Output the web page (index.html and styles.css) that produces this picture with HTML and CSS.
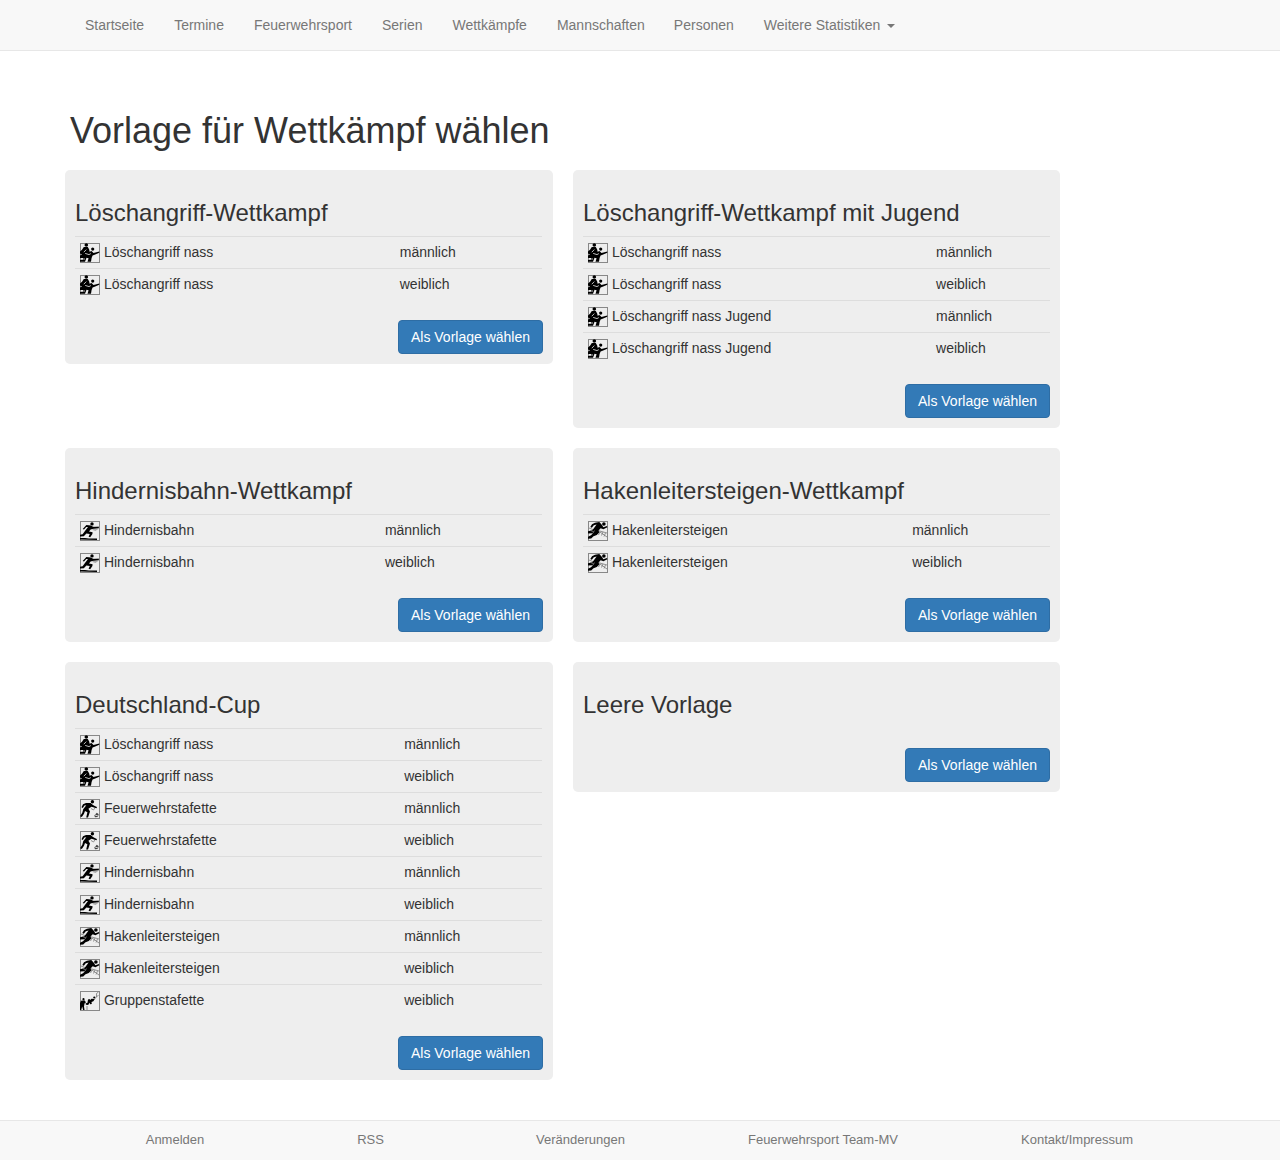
FILE: index.html
```html
<!DOCTYPE html>
<html lang="de">
<head>
<meta charset="utf-8">
<title>Vorlage für Wettkämpf wählen</title>
<link rel="stylesheet" href="styles.css">
</head>
<body>
<svg class="symbols" aria-hidden="true">
  <symbol id="la" viewBox="0 0 20 20">
    <rect class="frame" x=".5" y=".5" width="19" height="19"/>
    <circle cx="6.3" cy="2" r="1.8"/><circle cx="12.7" cy="6.1" r="1.6"/>
    <path d="M3.8 4 7.8 4 9.2 6.5 9.6 8.8 11.5 8 13.5 10 19.3 8.6V9.7L14.6 11.7 12.6 12.6 11.6 15 11 18.7H7.5L8.6 15.2 6.5 14.8 5 18.7H0V17L3 16.4 3 15H0V12.6L2 11.6 0 10.4V8.4L2 6.8Z"/>
    <path class="cut" d="M3.8 9.2 6.3 6.6M5.2 10.4 9 11.6 10.8 10.6M1.5 16H5"/>
  </symbol>
  <symbol id="hb" viewBox="0 0 20 20">
    <rect class="frame" x=".5" y=".5" width="19" height="19"/>
    <path class="mid" d="M13 5.5H19V7.5L15.5 10 12.5 9Z"/>
    <circle cx="12" cy="2.9" r="1.7"/>
    <path d="M6.4 4 10.8 4.4 13.5 6 18.8 5.8V6.9L13.4 7.8 10.6 8.4 9 10.6 12.6 11.2 12.4 13 10.2 16.2 8.6 15.8 9.8 13 6.4 12.6 3.8 15.2 0 15.4V13.8L2.6 13.2 4.6 10.4 8 6 6.2 5.9 4 8.6 2.7 7.9Z"/>
    <path d="M0 17 5 17 9 17.6H17V19L0 18.6Z"/>
  </symbol>
  <symbol id="hl" viewBox="0 0 20 20">
    <rect class="frame" x=".5" y=".5" width="19" height="19"/>
    <path class="thin" d="M1 7 6 9 12 11 19 16M10 9.5 19 12M12 11 10.5 14M15 11 13.5 14.5M17.5 12 16 15.5"/>
    <circle cx="15.9" cy="3" r="1.8"/>
    <path d="M7 1.7 11.3 1 14 4 15.3 6.2 19 5 19.4 6.3 15.4 8.3 12.7 7.2 10.5 9.6 11.2 11.5 8.8 14 5.5 15.2 3.2 17.6 0 17.8V15.8L3 14.2 5 12.3 0 12.4V10.2L4.4 9.2 8.6 3.4 5.8 4.3 3.8 6.8 2.3 6 4 3.3Z"/>
    <path class="thin" d="M2.5 9.5 6 11M6.5 9.5 5 12"/>
  </symbol>
  <symbol id="fs" viewBox="0 0 20 20">
    <rect class="frame" x=".5" y=".5" width="19" height="19"/>
    <path class="thin" d="M11 9.5 13.5 11 16 7.5"/>
    <circle cx="12.4" cy="2.8" r="1.7"/>
    <path d="M6 4 10.6 3.9 13 6 17 8.3 16.5 9.3 11.5 7.8 8.4 9.8 10 12.5 8 18.6H6.2L7.4 13.3 5 12 4 14.8 1.8 18 0 17.2 2.3 13.8 3.2 10.2 6.3 6.3 4.4 6.5 2.8 9 1.5 8.2 3 5.3Z"/>
    <path class="dark" d="M14.3 16.5 16.8 13.8 18.7 15.2 17.8 18 15 18.2Z"/><path class="cut" d="M15 16 18 17"/>
  </symbol>
  <symbol id="gs" viewBox="0 0 20 20">
    <rect class="frame" x=".5" y=".5" width="19" height="19"/>
    <circle cx="3.5" cy="8.2" r="1.1"/><circle cx="14.3" cy="6.5" r="1.1"/>
    <path d="M1 9.7 4.4 9.3 6 11.2 4.5 12.5 4 15.5 4.5 19H3.1L2.2 15.5 1.2 19H0V12Z"/>
    <path d="M5.5 12.5 7.5 11.8 8 8.6 9.5 8 10.2 9 11.5 7.8 14.8 8 13.4 10.2 11.5 11 11.8 13 10.2 13.3 9.5 11.8 8.2 14 6 13.8Z"/>
    <path class="thin" d="M14.5 8 16.5 6M18.5 1 16.5 2.5V6L18.5 4M7 15V19"/>
  </symbol>
</svg>

<nav class="navbar">
  <div class="container nav-list">
    <a>Startseite</a><a>Termine</a><a>Feuerwehrsport</a><a>Serien</a><a>Wettkämpfe</a><a class="tight">Mannschaften</a><a>Personen</a><a>Weitere Statistiken <span class="caret"></span></a>
  </div>
</nav>

<main class="container">
  <h1>Vorlage für Wettkämpf wählen</h1>
  <div class="templates">
    <section class="card">
      <h3>Löschangriff-Wettkampf</h3>
      <table>
        <tr><td><svg class="icon"><use href="#la"/></svg> Löschangriff nass</td><td>männlich</td></tr>
        <tr><td><svg class="icon"><use href="#la"/></svg> Löschangriff nass</td><td>weiblich</td></tr>
      </table>
      <div class="actions"><a class="btn">Als Vorlage wählen</a></div>
    </section>
    <section class="card">
      <h3>Löschangriff-Wettkampf mit Jugend</h3>
      <table>
        <tr><td><svg class="icon"><use href="#la"/></svg> Löschangriff nass</td><td>männlich</td></tr>
        <tr><td><svg class="icon"><use href="#la"/></svg> Löschangriff nass</td><td>weiblich</td></tr>
        <tr><td><svg class="icon"><use href="#la"/></svg> Löschangriff nass Jugend</td><td>männlich</td></tr>
        <tr><td><svg class="icon"><use href="#la"/></svg> Löschangriff nass Jugend</td><td>weiblich</td></tr>
      </table>
      <div class="actions"><a class="btn">Als Vorlage wählen</a></div>
    </section>
    <section class="card">
      <h3>Hindernisbahn-Wettkampf</h3>
      <table>
        <tr><td><svg class="icon"><use href="#hb"/></svg> Hindernisbahn</td><td>männlich</td></tr>
        <tr><td><svg class="icon"><use href="#hb"/></svg> Hindernisbahn</td><td>weiblich</td></tr>
      </table>
      <div class="actions"><a class="btn">Als Vorlage wählen</a></div>
    </section>
    <section class="card">
      <h3>Hakenleitersteigen-Wettkampf</h3>
      <table>
        <tr><td><svg class="icon"><use href="#hl"/></svg> Hakenleitersteigen</td><td>männlich</td></tr>
        <tr><td><svg class="icon"><use href="#hl"/></svg> Hakenleitersteigen</td><td>weiblich</td></tr>
      </table>
      <div class="actions"><a class="btn">Als Vorlage wählen</a></div>
    </section>
    <section class="card">
      <h3>Deutschland-Cup</h3>
      <table>
        <tr><td><svg class="icon"><use href="#la"/></svg> Löschangriff nass</td><td>männlich</td></tr>
        <tr><td><svg class="icon"><use href="#la"/></svg> Löschangriff nass</td><td>weiblich</td></tr>
        <tr><td><svg class="icon"><use href="#fs"/></svg> Feuerwehrstafette</td><td>männlich</td></tr>
        <tr><td><svg class="icon"><use href="#fs"/></svg> Feuerwehrstafette</td><td>weiblich</td></tr>
        <tr><td><svg class="icon"><use href="#hb"/></svg> Hindernisbahn</td><td>männlich</td></tr>
        <tr><td><svg class="icon"><use href="#hb"/></svg> Hindernisbahn</td><td>weiblich</td></tr>
        <tr><td><svg class="icon"><use href="#hl"/></svg> Hakenleitersteigen</td><td>männlich</td></tr>
        <tr><td><svg class="icon"><use href="#hl"/></svg> Hakenleitersteigen</td><td>weiblich</td></tr>
        <tr><td><svg class="icon"><use href="#gs"/></svg> Gruppenstafette</td><td>weiblich</td></tr>
      </table>
      <div class="actions"><a class="btn">Als Vorlage wählen</a></div>
    </section>
    <section class="card">
      <h3>Leere Vorlage</h3>
      <table></table>
      <div class="actions"><a class="btn">Als Vorlage wählen</a></div>
    </section>
  </div>
</main>

<footer class="footer">
  <div class="container footer-list">
    <a>Anmelden</a><a>RSS</a><a>Veränderungen</a><a>Feuerwehrsport Team-MV</a><a>Kontakt/Impressum</a>
  </div>
</footer>
</body>
</html>
```
FILE: styles.css
```css
* { box-sizing: border-box; }
body {
  margin: 0;
  min-height: 1160px;
  display: flex;
  flex-direction: column;
  font: 14px/20px "Liberation Sans", Arial, sans-serif;
  color: #333;
  background: #fff;
}
.symbols { display: none; }
.container { width: 1170px; margin: 0 auto; padding: 0 15px; }
.navbar { height: 51px; background: #f8f8f8; border-bottom: 1px solid #e7e7e7; }
.nav-list { display: flex; }
.nav-list a { padding: 15px; color: #777; }
.nav-list .tight { margin-right: -1px; }
.caret {
  display: inline-block;
  margin-left: 3px;
  vertical-align: middle;
  border-top: 4px solid;
  border-left: 4px solid transparent;
  border-right: 4px solid transparent;
}
h1, h3 { font-weight: 500; }
h1 { margin: 60px 0 19px; font-size: 36px; line-height: 40px; }
.templates {
  display: grid;
  grid-template-columns: 488px 487px;
  gap: 20px;
  align-items: start;
  margin-left: -5px;
}
.card { padding: 10px; background: #eee; border-radius: 5px; }
h3 { margin: 20px 0 10px; font-size: 24px; line-height: 26px; }
table { width: 467px; margin-bottom: 20px; border-spacing: 0; }
td {
  height: 32px;
  padding: 5px 5px 4px;
  border-top: 1px solid #ddd;
  vertical-align: top;
}
.icon { width: 20px; height: 20px; vertical-align: middle; }
.frame { fill: none; stroke: #888; }
.cut { fill: none; stroke: #eee; stroke-width: .8; }
.thin { fill: none; stroke: #777; stroke-width: .8; }
.mid { fill: #aaa; }
.dark { fill: #444; }
.actions { display: flex; justify-content: flex-end; }
.btn {
  width: 145px;
  padding: 6px 0;
  text-align: center;
  color: #fff;
  background: #337ab7;
  border: 1px solid #2e6da4;
  border-radius: 4px;
}
.footer {
  height: 40px;
  margin-top: auto;
  background: #f8f8f8;
  border-top: 1px solid #e7e7e7;
}
.footer-list {
  display: grid;
  grid-template-columns: 210px 181px 239px 246px 262px;
  font-size: 13px;
  text-align: center;
}
.footer-list a { padding-top: 9px; color: #777; }
```
